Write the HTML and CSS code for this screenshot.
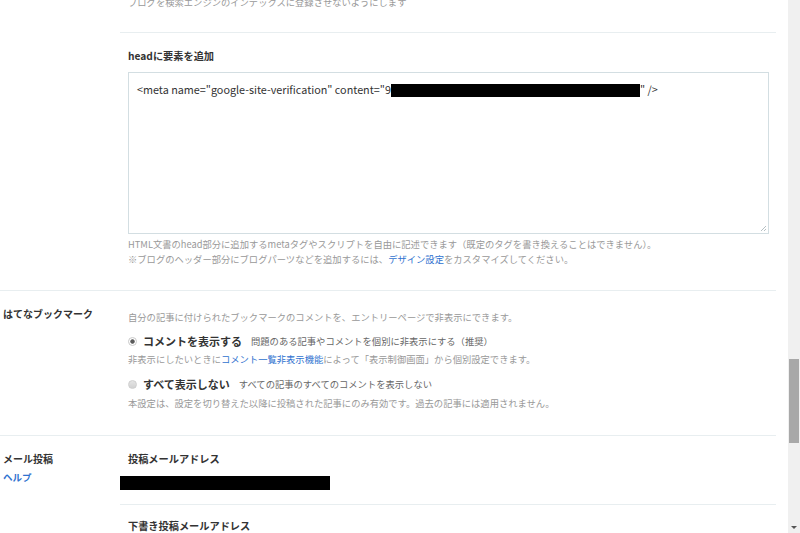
FILE: index.html
```html
<!DOCTYPE html>
<html lang="ja">
<head>
    <meta charset="UTF-8">
    <meta name="viewport" content="width=device-width, initial-scale=1.0">
    <title>詳細設定</title>
    <link rel="stylesheet" href="styles.css">
</head>
<body>
    <div class="window">
        <div class="page">
            <main class="settings">

                <section class="row">
                    <div class="row-label"></div>
                    <div class="row-body">
                        <div class="field field-first">
                            <p class="hint">ブログを検索エンジンのインデックスに登録させないようにします</p>
                        </div>
                        <div class="field field-head">
                            <h3 class="field-title">headに要素を追加</h3>
                            <div class="textarea">&lt;meta name="google-site-verification" content="9<span class="redacted redacted-code"></span>" /&gt;<svg class="grip" width="7" height="7" viewBox="0 0 7 7"><path d="M6 1 L1 6 M6 4 L4 6" stroke="#b5c0c4" stroke-width="1"/></svg></div>
                            <p class="hint hint-after">HTML文書のhead部分に追加するmetaタグやスクリプトを自由に記述できます（既定のタグを書き換えることはできません）。<br>※ブログのヘッダー部分にブログパーツなどを追加するには、<a href="#" class="link">デザイン設定</a>をカスタマイズしてください。</p>
                        </div>
                    </div>
                </section>

                <section class="row">
                    <div class="row-label">
                        <h2 class="label-title">はてなブックマーク</h2>
                    </div>
                    <div class="row-body">
                        <div class="field field-bookmark">
                            <p class="desc">自分の記事に付けられたブックマークのコメントを、エントリーページで非表示にできます。</p>
                            <label class="option option-first">
                                <span class="radio radio-on"></span>
                                <span class="option-name">コメントを表示する</span>
                                <span class="option-desc">問題のある記事やコメントを個別に非表示にする（推奨）</span>
                            </label>
                            <p class="hint hint-option">非表示にしたいときに<a href="#" class="link">コメント一覧非表示機能</a>によって「表示制御画面」から個別設定できます。</p>
                            <label class="option option-second">
                                <span class="radio radio-off"></span>
                                <span class="option-name">すべて表示しない</span>
                                <span class="option-desc">すべての記事のすべてのコメントを表示しない</span>
                            </label>
                            <p class="hint hint-last">本設定は、設定を切り替えた以降に投稿された記事にのみ有効です。過去の記事には適用されません。</p>
                        </div>
                    </div>
                </section>

                <section class="row row-last">
                    <div class="row-label">
                        <h2 class="label-title">メール投稿</h2>
                        <a href="#" class="label-help">ヘルプ</a>
                    </div>
                    <div class="row-body">
                        <div class="field field-mail">
                            <h3 class="field-title">投稿メールアドレス</h3>
                            <div class="redacted redacted-mail"></div>
                        </div>
                        <div class="field field-draft">
                            <h3 class="field-title">下書き投稿メールアドレス</h3>
                        </div>
                    </div>
                </section>

            </main>
        </div>
        <div class="scrollbar">
            <div class="scroll-thumb"></div>
            <div class="scroll-arrow"></div>
        </div>
    </div>
</body>
</html>
```

FILE: styles.css
```css
:root {
    --text-color: #333;
    --muted-color: #999;
    --sub-color: #666;
    --link-color: #2f72cf;
    --line-color: #e8eef0;
    --border-color: #d3dee2;
    --track-color: #f0f0f0;
    --thumb-color: #a8a8a8;
}

html,
body {
    margin: 0;
    height: 100%;
}

body {
    font-family: "Noto Sans CJK JP", "Noto Sans", sans-serif;
    background-color: #fff;
    color: var(--text-color);
    overflow: hidden;
}

.window {
    display: flex;
    height: 533px;
}

.page {
    flex: 1;
    overflow: hidden;
}

.settings {
    width: 776px;
    margin-top: -6px;
}

/* 設定の行 */
.row {
    display: grid;
    grid-template-columns: 120px 1fr;
    border-bottom: 1px solid var(--line-color);
}

.row-last {
    border-bottom: none;
}

.row-label {
    padding: 15px 0 0 3px;
}

.label-title {
    margin: 0;
    font-size: 10px;
    line-height: 16px;
    font-weight: bold;
}

.label-help {
    display: block;
    margin-top: 2px;
    font-size: 9.5px;
    line-height: 16px;
    font-weight: bold;
    color: var(--link-color);
    text-decoration: none;
}

.field {
    padding-left: 8px;
}

.field + .field {
    border-top: 1px solid var(--line-color);
}

.field-first {
    padding-bottom: 22px;
}

.field-head {
    padding: 15px 7px 23px 8px;
}

.field-title {
    margin: 0;
    font-size: 10.2px;
    line-height: 16px;
    font-weight: bold;
}

.textarea {
    position: relative;
    box-sizing: border-box;
    height: 162px;
    margin-top: 8px;
    padding: 8px;
    border: 1px solid var(--border-color);
    font-size: 10.8px;
    line-height: 16px;
    color: #333;
    white-space: nowrap;
}

.grip {
    position: absolute;
    right: 1px;
    bottom: 1px;
}

.redacted {
    display: inline-block;
    background-color: #000;
}

.redacted-code {
    width: 249px;
    height: 13px;
    vertical-align: -3px;
}

.hint {
    margin: 0;
    font-size: 9.3px;
    line-height: 15px;
    color: var(--muted-color);
}

.field-first .hint {
    line-height: 16px;
}

.hint-after {
    margin-top: 3px;
}

.link {
    color: var(--link-color);
    text-decoration: none;
}

/* はてなブックマーク */
.field-bookmark {
    padding-top: 18px;
    padding-bottom: 24px;
}

.desc {
    margin: 0;
    font-size: 9.3px;
    line-height: 16px;
    color: var(--muted-color);
}

.option {
    display: flex;
    align-items: center;
    height: 18px;
}

.option-first {
    margin-top: 7px;
}

.option-second {
    margin-top: 8px;
}

.hint-option {
    margin-top: 2px;
}

.hint-last {
    margin-top: 3px;
}

.radio {
    box-sizing: border-box;
    width: 9px;
    height: 9px;
    border-radius: 50%;
}

.radio-on {
    border: 1px solid #c9c9c9;
    background: radial-gradient(circle, #5a5a5a 0 1.8px, #fff 2.6px);
}

.radio-off {
    border: 1px solid #cfcfcf;
    background: linear-gradient(#e4e4e4, #d2d2d2);
}

.option-name {
    margin-left: 6px;
    font-size: 11px;
    font-weight: bold;
    color: #333;
}

.option-desc {
    margin-left: 9px;
    font-size: 9.3px;
    color: var(--sub-color);
}

/* メール投稿 */
.field-mail {
    padding-top: 15px;
    padding-bottom: 14px;
}

.redacted-mail {
    display: block;
    width: 210px;
    height: 14px;
    margin-top: 9px;
    margin-left: -8px;
}

.field-draft {
    padding-top: 13px;
}

/* スクロールバー */
.scrollbar {
    width: 12px;
    background-color: var(--track-color);
    display: flex;
    flex-direction: column;
    align-items: center;
}

.scroll-thumb {
    width: 10px;
    height: 84px;
    margin-top: 359px;
    background-color: var(--thumb-color);
}

.scroll-arrow {
    margin-top: auto;
    margin-bottom: 4px;
    width: 0;
    height: 0;
    border-left: 3px solid transparent;
    border-right: 3px solid transparent;
    border-top: 3px solid #555;
}
```
